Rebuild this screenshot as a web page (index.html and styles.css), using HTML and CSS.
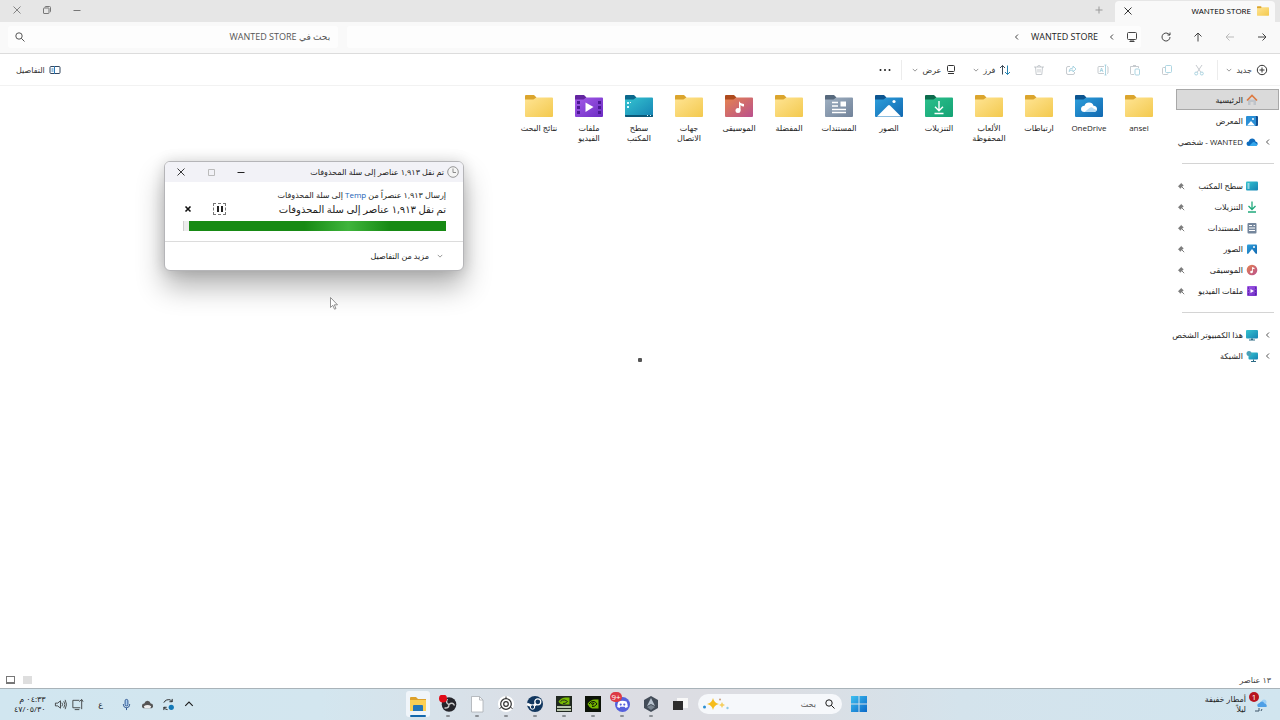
FILE: index.html
```html
<!DOCTYPE html>
<html lang="ar" dir="rtl">
<head>
    <meta charset="UTF-8">
    <meta name="viewport" content="width=device-width, initial-scale=1.0">
    <title>WANTED STORE</title>
    <link rel="stylesheet" href="styles.css">
</head>
<body>

    <!-- Icon sprite -->
    <svg class="sprite" aria-hidden="true">
        <defs>
            <linearGradient id="gYellow" x1="0" y1="0" x2="1" y2="1"><stop offset="0" stop-color="#ffe493"/><stop offset="1" stop-color="#f3c94e"/></linearGradient>
            <linearGradient id="gPurple" x1="0" y1="0" x2="1" y2="1"><stop offset="0" stop-color="#a45be8"/><stop offset="1" stop-color="#6c2cc4"/></linearGradient>
            <linearGradient id="gTeal" x1="0" y1="0" x2="1" y2="1"><stop offset="0" stop-color="#35c4d0"/><stop offset="1" stop-color="#1583b4"/></linearGradient>
            <linearGradient id="gMusic" x1="0" y1="0" x2="1" y2="1"><stop offset="0" stop-color="#e5834f"/><stop offset="1" stop-color="#b9508e"/></linearGradient>
            <linearGradient id="gGrey" x1="0" y1="0" x2="1" y2="1"><stop offset="0" stop-color="#9fb0c2"/><stop offset="1" stop-color="#718299"/></linearGradient>
            <linearGradient id="gBlue" x1="0" y1="0" x2="1" y2="1"><stop offset="0" stop-color="#2d9fdc"/><stop offset="1" stop-color="#1168b0"/></linearGradient>
            <linearGradient id="gGreen" x1="0" y1="0" x2="1" y2="1"><stop offset="0" stop-color="#2cc08c"/><stop offset="1" stop-color="#14a274"/></linearGradient>
            <linearGradient id="gWin" x1="0" y1="0" x2="1" y2="1"><stop offset="0" stop-color="#3fc0f0"/><stop offset="1" stop-color="#0a68c8"/></linearGradient>
        </defs>
        <symbol id="close" viewBox="0 0 10 10"><path d="M1.5 1.5l7 7M8.500 1.500l-7 7" fill="none" stroke="currentColor" stroke-width=".9"/></symbol>
        <symbol id="restore" viewBox="0 0 10 10"><path d="M3 2.500V2q0-.5.5-.5h4q1 0 1 1v4q0 .5-.5.500M1.500 3.500q0-.5.5-.5h4.500q.5 0 .5.5v4.500q0 .5-.5.500H2q-.5 0-.5-.5z" fill="none" stroke="currentColor"/></symbol>
        <symbol id="square" viewBox="0 0 10 10"><path d="M2.500 2.500h6v6h-6z" fill="none" stroke="currentColor"/></symbol>
        <symbol id="minus" viewBox="0 0 10 10"><path d="M1.500 5.500h7" stroke="currentColor"/></symbol>
        <symbol id="plus" viewBox="0 0 10 10"><path d="M5 1.500v7M1.500 5h7" stroke="currentColor"/></symbol>
        <symbol id="right" viewBox="0 0 12 12"><path d="M2 6h8M6.500 2.500L10 6l-3.500 3.500" fill="none" stroke="currentColor"/></symbol>
        <symbol id="left" viewBox="0 0 12 12"><path d="M10 6H2M5.500 2.500L2 6l3.500 3.500" fill="none" stroke="currentColor"/></symbol>
        <symbol id="up" viewBox="0 0 12 12"><path d="M6 10.500V2M2.500 5.500L6 2l3.500 3.500" fill="none" stroke="currentColor"/></symbol>
        <symbol id="refresh" viewBox="0 0 12 12"><path d="M10 6A4 4 0 1 1 8.500 2.900L10 4M10 1.500V4H7.500" fill="none" stroke="currentColor"/></symbol>
        <symbol id="monitor" viewBox="0 0 12 12"><rect x="1.500" y="1.500" width="9" height="7" rx="1" fill="none" stroke="currentColor"/><path d="M3.500 10.500h5M5 9v1M7 9v1" stroke="currentColor"/></symbol>
        <symbol id="chevLeft" viewBox="0 0 8 8"><path d="M5 1.500L2.500 4 5 6.500" fill="none" stroke="currentColor"/></symbol>
        <symbol id="chevDown" viewBox="0 0 8 8"><path d="M1 2.500l3 3 3-3" fill="none" stroke="currentColor"/></symbol>
        <symbol id="chevUp" viewBox="0 0 8 8"><path d="M1 5.500l3-3 3 3" fill="none" stroke="currentColor" stroke-width=".9"/></symbol>
        <symbol id="search" viewBox="0 0 12 12"><circle cx="5" cy="5" r="3.200" fill="none" stroke="currentColor"/><path d="M7.300 7.300L10.500 10.500" stroke="currentColor"/></symbol>
        <symbol id="add" viewBox="0 0 12 12"><circle cx="6" cy="6" r="4.700" fill="none" stroke="currentColor"/><path d="M6 3.500v5M3.500 6h5" stroke="currentColor"/></symbol>
        <symbol id="cut" viewBox="0 0 12 12"><path d="M3 1l5 7.500M9 1L4 8.500" fill="none" stroke="#8a939c" stroke-width=".8"/><circle cx="3.200" cy="9.500" r="1.500" fill="none" stroke="#57a9c4" stroke-width=".8"/><circle cx="8.800" cy="9.500" r="1.500" fill="none" stroke="#57a9c4" stroke-width=".8"/></symbol>
        <symbol id="copy" viewBox="0 0 12 12"><rect x="4.500" y="1.500" width="6" height="7" rx="1" fill="none" stroke="#57a9c4" stroke-width=".8"/><path d="M4 3.500H2.500q-1 0-1 1v5q0 1 1 1H6q1 0 1-1" fill="none" stroke="#8a939c" stroke-width=".8"/></symbol>
        <symbol id="paste" viewBox="0 0 12 12"><path d="M5 10.500H2.500q-1 0-1-1V2.500h8V4M4 1.500h3" fill="none" stroke="#8a939c" stroke-width=".8"/><rect x="6" y="5" width="4.500" height="6" rx="1" fill="none" stroke="#57a9c4" stroke-width=".8"/></symbol>
        <symbol id="rename" viewBox="0 0 12 12"><path d="M7 2.500H2q-1 0-1 1v5q0 1 1 1h5M10 2.500q1 0 1 1v5q0 1-1 1" fill="none" stroke="#8a939c" stroke-width=".8"/><path d="M8.500 1v10M7.500 1h2M7.500 11h2M3 8l1.500-4L6 8M3.500 6.500h2" fill="none" stroke="#57a9c4" stroke-width=".8"/></symbol>
        <symbol id="share" viewBox="0 0 12 12"><path d="M5 2.500H3q-1.500 0-1.500 1.500v5q0 1.500 1.500 1.500h5q1.500 0 1.500-1.500V8" fill="none" stroke="#8a939c" stroke-width=".8"/><path d="M4 7.500q0-3.500 4-3.500V2l3 3-3 3V6Q5.500 6 4 7.500z" fill="none" stroke="#57a9c4" stroke-width=".8"/></symbol>
        <symbol id="trash" viewBox="0 0 12 12"><path d="M1 3h10M4.500 3q0-1.500 1.500-1.500T7.500 3M2.500 3l.7 7.500h5.600L9.500 3M5 5v3.500M7 5v3.500" fill="none" stroke="#8a939c" stroke-width=".8"/></symbol>
        <symbol id="sort" viewBox="0 0 12 12"><path d="M3.500 10.500v-9M1 4l2.500-2.500L6 4" fill="none" stroke="#3e4c59"/><path d="M8.500 1.500v9M6 8l2.500 2.500L11 8" fill="none" stroke="#2583b0"/></symbol>
        <symbol id="view" viewBox="0 0 12 12"><rect x="2.500" y="1.500" width="7" height="6" rx="1" fill="none" stroke="currentColor"/><path d="M3 9.500h6" stroke="currentColor"/></symbol>
        <symbol id="dots" viewBox="0 0 12 12"><g fill="currentColor"><circle cx="1.500" cy="6" r="1"/><circle cx="6" cy="6" r="1"/><circle cx="10.500" cy="6" r="1"/></g></symbol>
        <symbol id="pane" viewBox="0 0 12 12"><rect x="1" y="2.500" width="10" height="7" rx="1" fill="none" stroke="#33475f"/><path d="M5.500 2v8M2.500 5h2M2.500 7h2" stroke="#2a7ab8"/></symbol>

        <symbol id="folder" viewBox="0 0 28 24"><path d="M0 2q0-1 1-1h8l2.500 2.500L9 7H0z" fill="#dba52d"/><path d="M0 5.500h8.500l3-2H27q1 0 1 1V22q0 1-1 1H1q-1 0-1-1z" fill="url(#gYellow)"/></symbol>
        <symbol id="fVideo" viewBox="0 0 28 24"><path d="M0 2q0-1 1-1h8l2.500 2.500L9 7H0z" fill="#6325a0"/><path d="M0 5.500h8.500l3-2H27q1 0 1 1V22q0 1-1 1H1q-1 0-1-1z" fill="url(#gPurple)"/><g fill="#4b1894"><path d="M2 7h3v3H2zM2 12h3v3H2zM2 17h3v3H2zM23 7h3v3h-3zM23 12h3v3h-3zM23 17h3v3h-3z"/></g><path d="M10.500 8.500l8 4.500-8 5z" fill="#fff"/></symbol>
        <symbol id="fDesktop" viewBox="0 0 28 24"><path d="M0 2q0-1 1-1h8l2.500 2.500L9 7H0z" fill="#0b688c"/><path d="M0 5.500h8.500l3-2H27q1 0 1 1V22q0 1-1 1H1q-1 0-1-1z" fill="url(#gTeal)"/><path d="M0 21h28v1q0 1-1 1H1q-1 0-1-1z" fill="#0b5878"/><path d="M2 8h2v2H2zM2 12h2v2H2zM5 8h1v1H5zM22 21h1v1h-1zM25 21h1v1h-1z" fill="#d8fbff"/></symbol>
        <symbol id="fMusic" viewBox="0 0 28 24"><path d="M0 2q0-1 1-1h8l2.500 2.500L9 7H0z" fill="#ae4a1d"/><path d="M0 5.500h8.500l3-2H27q1 0 1 1V22q0 1-1 1H1q-1 0-1-1z" fill="url(#gMusic)"/><path d="M14 6.500q0 2.500 5 3.500v2.500q-2 0-3.500-1.500v5.500H14z" fill="#fff"/><circle cx="13" cy="16.500" r="2.500" fill="#fff"/></symbol>
        <symbol id="fDocs" viewBox="0 0 28 24"><path d="M0 2q0-1 1-1h8l2.500 2.500L9 7H0z" fill="#57697d"/><path d="M0 5.500h8.500l3-2H27q1 0 1 1V22q0 1-1 1H1q-1 0-1-1z" fill="url(#gGrey)"/><path d="M7 8.500h6M7 12h6M7 15.500h14M7 18.500h14" stroke="#fff" stroke-width="1.600"/><path d="M15.500 7.500h5.500v5h-5.500z" fill="#fff"/></symbol>
        <symbol id="fPics" viewBox="0 0 28 24"><path d="M0 2q0-1 1-1h8l2.500 2.500L9 7H0z" fill="#0c5590"/><path d="M0 5.500h8.500l3-2H27q1 0 1 1V22q0 1-1 1H1q-1 0-1-1z" fill="url(#gBlue)"/><path d="M2 22.500L13 11.500q1-1 2 0l11 11z" fill="#fff"/><circle cx="19" cy="7.500" r="1.600" fill="#fff"/></symbol>
        <symbol id="fDown" viewBox="0 0 28 24"><path d="M0 2q0-1 1-1h8l2.500 2.500L9 7H0z" fill="#0d6b4d"/><path d="M0 5.500h8.500l3-2H27q1 0 1 1V22q0 1-1 1H1q-1 0-1-1z" fill="url(#gGreen)"/><path d="M14 7v9.500M10 12.800l4 4 4-4M9.500 19.500h9" fill="none" stroke="#fff" stroke-width="1.400"/></symbol>
        <symbol id="fCloud" viewBox="0 0 28 24"><path d="M0 2q0-1 1-1h8l2.500 2.500L9 7H0z" fill="#0c5590"/><path d="M0 5.500h8.500l3-2H27q1 0 1 1V22q0 1-1 1H1q-1 0-1-1z" fill="url(#gBlue)"/><path d="M9.500 18q-3.500 0-3.500-3t3.500-3.200Q10.500 8.500 14 8.500t4.500 3.300Q22 12 22 15t-3.500 3z" fill="#fff"/><path d="M9.500 18l5-4q2-1.500 4 .5l3 1.500q-.8 2-3 2z" fill="#b6dcf5"/></symbol>

        <symbol id="home" viewBox="0 0 12 12"><path d="M2 5.500h8V11H7.500V8h-3v3H2z" fill="#bfc4ca"/><path d="M1 6.500l5-5 5 5" fill="none" stroke="#dd7a40" stroke-width="1.700"/></symbol>
        <symbol id="gallery" viewBox="0 0 12 12"><rect x="3" y="1" width="9" height="10" rx="1" fill="#124f91"/><rect x="0" y="1" width="10" height="10" rx="1" fill="#2a8fd6"/><path d="M1 10.500l4-4.500 4 4.500z" fill="#fff"/><circle cx="7" cy="4" r="1" fill="#fff"/></symbol>
        <symbol id="cloud" viewBox="0 0 12 12"><path d="M3 10Q.5 10 .5 7.800T2.700 5.500Q3.500 2.500 6.200 2.500T9.500 5.500q2.200.3 2.200 2.300T9.500 10z" fill="#0f6cbd"/><path d="M3 10l3.500-3.500Q8 5.500 9.500 7l2 1.500Q11 10 9.500 10z" fill="#35a7ec"/></symbol>
        <symbol id="desk" viewBox="0 0 12 12"><rect x="0" y="1.500" width="12" height="9" rx="1" fill="url(#gTeal)"/><path d="M1.500 3.500h2v1h-2zM1.500 5.500h2v1h-2zM1.500 7.500h2v1h-2z" fill="#fff"/></symbol>
        <symbol id="down" viewBox="0 0 12 12"><path d="M6 .5V8M2.500 5L6 8.500 9.500 5M2 11h8" fill="none" stroke="#20a97c" stroke-width="1.300"/></symbol>
        <symbol id="doc" viewBox="0 0 12 12"><rect x="1.500" y="1" width="9" height="10.500" rx="1" fill="#74869c"/><path d="M3 3.500h3M3 6h6M3 8.500h6M7.500 3.500H9" stroke="#fff"/></symbol>
        <symbol id="pic" viewBox="0 0 12 12"><rect x="1" y="1.500" width="10" height="9.500" rx="1" fill="url(#gBlue)"/><path d="M2 11l4-5 4 5z" fill="#fff"/><circle cx="8" cy="4" r="1" fill="#fff"/></symbol>
        <symbol id="music" viewBox="0 0 12 12"><circle cx="6" cy="6" r="5.300" fill="url(#gMusic)"/><path d="M6 3l2.500 1v1.200L6.800 4.800V8H6z" fill="#fff"/><circle cx="5.500" cy="8" r="1.300" fill="#fff"/></symbol>
        <symbol id="video" viewBox="0 0 12 12"><rect x="1" y="1" width="10" height="10" rx="1" fill="url(#gPurple)"/><path d="M2 3h1M2 6h1M2 9h1M9 3h1M9 6h1M9 9h1" stroke="#3c1283"/><path d="M4.500 4l3.500 2-3.500 2z" fill="#fff"/></symbol>
        <symbol id="pc" viewBox="0 0 12 12"><rect x="0" y="1" width="12" height="8.500" rx="1" fill="url(#gTeal)"/><path d="M3 11h6" stroke="#2c6a84"/><path d="M5 9.500h2V11H5z" fill="#2c6a84"/></symbol>
        <symbol id="net" viewBox="0 0 12 12"><rect x="2.500" y="2.500" width="9.500" height="7" rx="1" fill="url(#gTeal)"/><circle cx="3" cy="3.500" r="2.500" fill="#4aa0b8"/><path d="M5 11.500h5M7.500 9.500v2" stroke="#2c6a84"/></symbol>
        <symbol id="pin" viewBox="0 0 8 8"><path d="M4.500.8L.8 4.500l1 .2 1.400 2L6.700 3.200l-2-1.400z" fill="#7d7d7d"/><path d="M5 5l2.200 2.200" stroke="#7d7d7d"/></symbol>
        <symbol id="clock" viewBox="0 0 12 12"><circle cx="6" cy="6" r="5.300" fill="#f4f4f4" stroke="#8b8b8b" stroke-width=".9"/><path d="M6 2.500V6.500h3" fill="none" stroke="#8b8b8b"/></symbol>
    </svg>

    <!-- Tab bar -->
    <header class="tab-bar">
        <div class="tab">
            <svg class="icon"><use href="#folder"/></svg>
            <span class="tab-title">WANTED STORE</span>
            <button class="tab-close" aria-label="إغلاق علامة التبويب"><svg class="icon-small"><use href="#close"/></svg></button>
        </div>
        <button class="new-tab" aria-label="علامة تبويب جديدة"><svg class="icon-small"><use href="#plus"/></svg></button>
        <div class="window-buttons">
            <button aria-label="تصغير"><svg class="icon-small"><use href="#minus"/></svg></button>
            <button aria-label="استعادة"><svg class="icon-small"><use href="#restore"/></svg></button>
            <button aria-label="إغلاق"><svg class="icon-small"><use href="#close"/></svg></button>
        </div>
    </header>

    <!-- Navigation bar -->
    <nav class="nav-bar">
        <div class="nav-buttons">
            <button aria-label="رجوع"><svg class="icon"><use href="#right"/></svg></button>
            <button aria-label="للأمام" class="dim"><svg class="icon"><use href="#left"/></svg></button>
            <button aria-label="لأعلى"><svg class="icon"><use href="#up"/></svg></button>
            <button aria-label="تحديث"><svg class="icon"><use href="#refresh"/></svg></button>
        </div>
        <div class="address">
            <svg class="icon"><use href="#monitor"/></svg>
            <svg class="chevron"><use href="#chevLeft"/></svg>
            <a href="#">WANTED STORE</a>
            <svg class="chevron"><use href="#chevLeft"/></svg>
        </div>
        <div class="search-box">
            <input type="text" placeholder="بحث في WANTED STORE" aria-label="بحث">
            <svg class="icon"><use href="#search"/></svg>
        </div>
    </nav>

    <!-- Command bar -->
    <div class="command-bar">
        <button class="command"><svg class="icon"><use href="#add"/></svg>جديد<svg class="arrow"><use href="#chevDown"/></svg></button>
        <span class="divider"></span>
        <div class="edit-buttons">
            <button aria-label="قص"><svg class="icon"><use href="#cut"/></svg></button>
            <button aria-label="نسخ"><svg class="icon"><use href="#copy"/></svg></button>
            <button aria-label="لصق"><svg class="icon"><use href="#paste"/></svg></button>
            <button aria-label="إعادة تسمية"><svg class="icon"><use href="#rename"/></svg></button>
            <button aria-label="مشاركة"><svg class="icon"><use href="#share"/></svg></button>
            <button aria-label="حذف"><svg class="icon"><use href="#trash"/></svg></button>
        </div>
        <button class="command"><svg class="icon"><use href="#sort"/></svg>فرز<svg class="arrow"><use href="#chevDown"/></svg></button>
        <button class="command view"><svg class="icon"><use href="#view"/></svg>عرض<svg class="arrow"><use href="#chevDown"/></svg></button>
        <span class="divider"></span>
        <button class="more" aria-label="المزيد"><svg class="icon"><use href="#dots"/></svg></button>
        <button class="command details"><svg class="icon"><use href="#pane"/></svg>التفاصيل</button>
    </div>

    <!-- Explorer -->
    <div class="explorer">
        <aside class="sidebar">
            <ul>
                <li class="selected"><a href="#"><svg class="icon"><use href="#home"/></svg>الرئيسية</a></li>
                <li><a href="#"><svg class="icon"><use href="#gallery"/></svg>المعرض</a></li>
                <li><svg class="chevron"><use href="#chevLeft"/></svg><a href="#"><svg class="icon"><use href="#cloud"/></svg>WANTED - شخصي</a></li>
            </ul>
            <ul>
                <li><a href="#"><svg class="icon"><use href="#desk"/></svg>سطح المكتب</a><svg class="pin"><use href="#pin"/></svg></li>
                <li><a href="#"><svg class="icon"><use href="#down"/></svg>التنزيلات</a><svg class="pin"><use href="#pin"/></svg></li>
                <li><a href="#"><svg class="icon"><use href="#doc"/></svg>المستندات</a><svg class="pin"><use href="#pin"/></svg></li>
                <li><a href="#"><svg class="icon"><use href="#pic"/></svg>الصور</a><svg class="pin"><use href="#pin"/></svg></li>
                <li><a href="#"><svg class="icon"><use href="#music"/></svg>الموسيقى</a><svg class="pin"><use href="#pin"/></svg></li>
                <li><a href="#"><svg class="icon"><use href="#video"/></svg>ملفات الفيديو</a><svg class="pin"><use href="#pin"/></svg></li>
            </ul>
            <ul>
                <li><svg class="chevron"><use href="#chevLeft"/></svg><a href="#"><svg class="icon"><use href="#pc"/></svg>هذا الكمبيوتر الشخص</a></li>
                <li><svg class="chevron"><use href="#chevLeft"/></svg><a href="#"><svg class="icon"><use href="#net"/></svg>الشبكة</a></li>
            </ul>
        </aside>

        <main class="files">
            <a href="#" class="file"><svg><use href="#folder"/></svg><span>ansel</span></a>
            <a href="#" class="file"><svg><use href="#fCloud"/></svg><span>OneDrive</span></a>
            <a href="#" class="file"><svg><use href="#folder"/></svg><span>ارتباطات</span></a>
            <a href="#" class="file"><svg><use href="#folder"/></svg><span>الألعاب المحفوظة</span></a>
            <a href="#" class="file"><svg><use href="#fDown"/></svg><span>التنزيلات</span></a>
            <a href="#" class="file"><svg><use href="#fPics"/></svg><span>الصور</span></a>
            <a href="#" class="file"><svg><use href="#fDocs"/></svg><span>المستندات</span></a>
            <a href="#" class="file"><svg><use href="#folder"/></svg><span>المفضلة</span></a>
            <a href="#" class="file"><svg><use href="#fMusic"/></svg><span>الموسيقى</span></a>
            <a href="#" class="file"><svg><use href="#folder"/></svg><span>جهات الاتصال</span></a>
            <a href="#" class="file"><svg><use href="#fDesktop"/></svg><span>سطح المكتب</span></a>
            <a href="#" class="file"><svg><use href="#fVideo"/></svg><span>ملفات الفيديو</span></a>
            <a href="#" class="file"><svg><use href="#folder"/></svg><span>نتائج البحث</span></a>
        </main>
    </div>

    <!-- Status bar -->
    <footer class="status-bar">
        <span>١٣ عناصر</span>
        <div class="layout-buttons">
            <button class="list-view" aria-label="تفاصيل"></button>
            <button class="icon-view" aria-label="رموز كبيرة"></button>
        </div>
    </footer>

    <!-- Taskbar -->
    <div class="taskbar">
        <button class="weather">
            <span class="weather-icon">
                <svg viewBox="0 0 16 18"><circle cx="12" cy="7" r="2.500" fill="#9fd0f5"/><path d="M6 12q-2-3 1.500-4 3-3 5 .5 3 .5 2 3.500z" fill="#4e9fe6"/><path d="M7 13v3H3M10 14l-1 2" fill="none" stroke="#3d5468"/></svg>
                <span class="badge">1</span>
            </span>
            <span>أمطار خفيفة<br>ليلاً</span>
        </button>

        <div class="apps">
            <button aria-label="ابدأ"><svg viewBox="0 0 18 18"><path d="M1 1h7.500v7.500H1zM9.500 1H17v7.500H9.500zM1 9.500h7.500V17H1zM9.500 9.500H17V17H9.500z" fill="url(#gWin)"/></svg></button>
            <div class="task-search">
                <svg class="icon"><use href="#search"/></svg>
                <input type="text" placeholder="بحث" aria-label="بحث في شريط المهام">
                <svg class="sparkle" viewBox="0 0 28 14"><path d="M11 1q1 5 6 6-5 1-6 6-1-5-6-6 5-1 6-6z" fill="#f6bc1c"/><path d="M20 5q.5 2.500 3 3-2.500.5-3 3-.5-2.500-3-3 2.500-.5 3-3z" fill="#f4cf62"/><circle cx="2.500" cy="10" r="1.500" fill="#2b8fd0"/><circle cx="18" cy="2.500" r="1" fill="#c79b7a"/><circle cx="25.500" cy="11" r="1.200" fill="#8ecae6"/></svg>
            </div>
            <button aria-label="عرض المهام"><svg viewBox="0 0 18 18"><path d="M6 3h11v10H6z" fill="#f8f8f8"/><path d="M2 6h10v9H2z" fill="#2d2d2d"/></svg></button>
            <button class="running" aria-label="NVIDIA Frame"><svg viewBox="0 0 18 18"><path d="M9 1l7 4v8l-7 4-7-4V5z" fill="#434c58"/><path d="M9 3l4 8-4-2-4 2z" fill="#b9c3cf"/><path d="M5 12l4-2 4 2-4 3z" fill="#78838f"/></svg></button>
            <button class="running" aria-label="Discord"><svg viewBox="0 0 18 18"><circle cx="9.500" cy="9.500" r="7.500" fill="#5560dc"/><path d="M5.500 6.500q4-1.500 8 0 1.500 3 1.300 5.500l-2.300 1-.8-1.200H7.300L6.500 13l-2.300-1Q4 9.500 5.500 6.500z" fill="#fff"/><circle cx="7.700" cy="9.600" r="1.100" fill="#5560dc"/><circle cx="11.300" cy="9.600" r="1.100" fill="#5560dc"/></svg><span class="badge count" dir="ltr">9+</span></button>
            <button class="running" aria-label="NVIDIA"><svg viewBox="0 0 18 18"><path d="M1 1h16v16H1z" fill="#0c1208"/><path d="M3.500 9q3-4.500 7-4.500h4v9H8Q5 12.500 3.500 9z" fill="#76b900"/><path d="M5 9q2-3 5-2.500 2 .5 3 2.500-2.500 3-5 2.500M7 9q1.500-1.500 3-.5-1 1.500-2 1.500" fill="none" stroke="#0c1208"/></svg></button>
            <button class="running" aria-label="NVIDIA Inspector"><svg viewBox="0 0 18 18"><path d="M1 1h16v16H1z" fill="#202820"/><path d="M3.500 6.500q3-4 7-4h4v7H8Q5 9.500 3.500 6.500z" fill="#76b900"/><path d="M5.500 6.500q2-2 4-1.500t3 1.500Q10 9 8 8.500" fill="none" stroke="#202820"/><path d="M2 11h14v2H2zM2 14h14v2H2z" fill="#b8c4ac"/></svg></button>
            <button class="running" aria-label="Steam"><svg viewBox="0 0 18 18"><circle cx="9" cy="9" r="8" fill="#12375f"/><path d="M1 9l6 2.500L11 8" fill="none" stroke="#fff" stroke-width="2.500"/><circle cx="11.800" cy="6.800" r="3" fill="#12375f" stroke="#fff" stroke-width="1.300"/><circle cx="6.500" cy="12" r="2.200" fill="#12375f" stroke="#fff"/></svg></button>
            <button class="running" aria-label="الإعدادات"><svg viewBox="0 0 18 18"><circle cx="9" cy="9" r="6.800" fill="none" stroke="#fff" stroke-width="2.500"/><circle cx="9" cy="9" r="5.300" fill="#fff" stroke="#333" stroke-width="1.200"/><circle cx="9" cy="9" r="2.300" fill="none" stroke="#333" stroke-width="1.200"/><path d="M9 1.500v2.500M2.500 13.500l2-1.200M15.500 13.500l-2-1.200" stroke="#333"/></svg></button>
            <button class="running" aria-label="المفكرة"><svg viewBox="0 0 18 18"><path d="M3.500 1.500h8l3.500 3.500v12H3.500z" fill="#fff" stroke="#a9adb2" stroke-width=".8"/><path d="M11.500 1.500V5H15" fill="none" stroke="#a9adb2" stroke-width=".8"/></svg></button>
            <button class="running" aria-label="OBS Studio"><svg viewBox="0 0 18 18"><circle cx="10" cy="9.500" r="7.300" fill="#25252b"/><path d="M10 9.500Q6 8 8.500 4M10 9.500q3.500-3 5.500 1M10 9.500q0 4-4.500 3.500" fill="none" stroke="#ccc" stroke-width="1.400"/><circle cx="4" cy="3.500" r="4" fill="#e00a17"/></svg></button>
            <button class="running active" aria-label="مستكشف الملفات"><svg viewBox="0 0 18 18"><path d="M1 3q0-1 1-1h5l2 2h8v5H1z" fill="#dda12c"/><path d="M1 5h16v11H1z" fill="#fbcf54"/><path d="M4 11q0-1 1-1h8q1 0 1 1v5H4z" fill="#2576b8"/></svg></button>
        </div>

        <div class="tray">
            <button aria-label="إظهار الرموز المخفية"><svg class="icon-small"><use href="#chevUp"/></svg></button>
            <button aria-label="تحديث النظام"><svg viewBox="0 0 14 14"><path d="M2 5q2-4 7-3l2 2M11 1v3H8M2 13v-3h3M2 10q1 2.500 4 2.500" fill="none" stroke="#222"/><circle cx="10" cy="10" r="2.800" fill="#147ab8"/></svg></button>
            <button aria-label="OneDrive"><svg viewBox="0 0 14 14"><path d="M4 11Q1 11 1 8.500T3.500 6Q4.500 3 7 3t3.500 3Q13 6 13 8.500T10 11z" fill="#555"/><path d="M3 9q4-3 8 0l-1 2H4z" fill="#eee"/></svg></button>
            <button aria-label="الميكروفون"><svg viewBox="0 0 14 14"><rect x="5.500" y="1.500" width="3" height="7" rx="1.500" fill="#a9cdf2" stroke="#27508c"/><path d="M3.500 6.500q0 4 3.500 4t3.500-4M7 10.500V13" fill="none" stroke="#27508c"/></svg></button>
            <button class="language">ع</button>
            <button class="network" aria-label="الشبكة والصوت">
                <svg viewBox="0 0 14 14"><path d="M9 2.500H2v8h8M4 12.500h5M9 4l2.500-2.500L13 4M11.500 2v10" fill="none" stroke="#333" stroke-width=".9"/></svg>
                <svg viewBox="0 0 14 14"><path d="M1.500 5.500H4L7 3v8L4 8.500H1.500zM8.500 5q1.500 2 0 4M10.500 3.500q2.500 3.500 0 7M12 2q3 5 0 10" fill="none" stroke="#333" stroke-width=".9"/></svg>
            </button>
            <button class="time">٠٤:٣٣ م<br>٤٧/٠٥/٣٠</button>
        </div>
    </div>

    <!-- Delete progress window -->
    <section class="dialog" role="dialog" aria-labelledby="dialogTitle">
        <div class="dialog-title">
            <svg class="icon"><use href="#clock"/></svg>
            <span id="dialogTitle">تم نقل ١,٩١٣ عناصر إلى سلة المحذوفات</span>
            <div class="window-buttons">
                <button aria-label="تصغير"><svg class="icon-small"><use href="#minus"/></svg></button>
                <button aria-label="تكبير" class="dim"><svg class="icon-small"><use href="#square"/></svg></button>
                <button aria-label="إغلاق"><svg class="icon-small"><use href="#close"/></svg></button>
            </div>
        </div>
        <div class="dialog-body">
            <p>إرسال ١,٩١٣ عنصراً من <a href="#">Temp</a> إلى سلة المحذوفات</p>
            <div class="dialog-status">
                <label for="deleteProgress">تم نقل ١,٩١٣ عناصر إلى سلة المحذوفات</label>
                <button class="pause" aria-label="إيقاف مؤقت"></button>
                <button class="cancel" aria-label="إلغاء"><svg viewBox="0 0 8 8"><path d="M1.500 1.500l5 5M6.500 1.500l-5 5" stroke="#111" stroke-width="1.600"/></svg></button>
            </div>
            <progress id="deleteProgress" value="98" max="100"></progress>
        </div>
        <div class="dialog-footer">
            <button><svg class="arrow"><use href="#chevDown"/></svg>مزيد من التفاصيل</button>
        </div>
    </section>

    <span class="busy-dot"></span>
    <svg class="cursor" viewBox="0 0 8 13"><path d="M.5.5v10l2.300-2.200 1.700 3.900 1.500-.7-1.700-3.700h3.200z" fill="#fff" stroke="#777" stroke-width=".8"/></svg>

</body>
</html>
```
FILE: styles.css
```css
* {
    box-sizing: border-box;
}
body {
    display: flex;
    flex-direction: column;
    height: 100vh;
    margin: 0;
    overflow: hidden;
    background-color: #fff;
    color: #1d1d1d;
    font-family: "Open Sans", "DejaVu Sans", sans-serif;
    font-size: 8px;
    line-height: 10px;
}
a {
    color: inherit;
    text-decoration: none;
}
button {
    display: flex;
    align-items: center;
    justify-content: center;
    padding: 0;
    border: 0;
    background: none;
    color: inherit;
    font: inherit;
}
input {
    min-width: 0;
    border: 0;
    outline: 0;
    background: none;
    color: inherit;
    font: inherit;
}
input::placeholder {
    color: #555;
    opacity: 1;
}
ul {
    margin: 0;
    padding: 0;
    list-style: none;
}
svg {
    flex: none;
}
.sprite {
    position: absolute;
    width: 0;
    height: 0;
}
.icon {
    width: 12px;
    height: 12px;
}
.icon-small {
    width: 10px;
    height: 10px;
}
.chevron,
.arrow,
.pin {
    width: 8px;
    height: 8px;
}
.arrow {
    width: 6px;
    color: #777;
}
.dim {
    color: #aaa;
}

/* Tab bar */
.tab-bar {
    display: flex;
    align-items: center;
    height: 22px;
    padding: 0 5px 2px 0;
    background-color: #e6e6e6;
}
.tab {
    display: flex;
    align-items: center;
    gap: 6px;
    width: 160px;
    height: 21px;
    margin: 1px 0 -2px;
    padding: 0 6px 2px;
    border-radius: 4px 4px 0 0;
    background-color: #f9f9f9;
}
.tab-title {
    color: #000;
}
.tab-close {
    margin-right: auto;
    width: 14px;
}
.new-tab {
    width: 32px;
    color: #999;
}
.window-buttons {
    display: flex;
    margin-right: auto;
    padding-left: 2px;
    color: #777;
}
.window-buttons button {
    width: 30px;
    height: 20px;
}

/* Navigation bar */
.nav-bar {
    display: flex;
    align-items: center;
    gap: 9px;
    height: 32px;
    padding: 0 2px 1px 8px;
    border-bottom: 1px solid #dcdcdc;
    background-color: #f9f9f9;
}
.nav-buttons {
    display: flex;
    color: #444;
}
.nav-buttons button {
    width: 32px;
    height: 22px;
}
.nav-buttons .dim {
    color: #bbb;
}
.address,
.search-box {
    display: flex;
    align-items: center;
    height: 22px;
    border-radius: 3px;
    background-color: #fdfdfd;
    font-size: 9px;
}
.address {
    flex: 1;
    gap: 10px;
    padding: 0 3px;
}
.address .icon,
.address .chevron {
    color: #444;
}
.search-box {
    width: 26%;
    padding: 0 8px 0 6px;
    color: #555;
}
.search-box input {
    flex: 1;
    padding: 0;
}

/* Command bar */
.command-bar {
    display: flex;
    align-items: center;
    height: 32px;
    padding: 0 12px;
    border-bottom: 1px solid #f2f2f2;
}
.command {
    gap: 4px;
    height: 20px;
    color: #333;
}
.divider {
    width: 1px;
    height: 20px;
    margin: 0 8px 0 12px;
    background-color: #ececec;
}
.command-bar > .divider ~ .divider {
    margin: 0 10px;
}
.edit-buttons {
    display: flex;
    gap: 20px;
    margin-left: 22px;
    opacity: 0.6;
}
.view {
    margin-right: 16px;
}
.details {
    margin: 0 auto 0 4px;
}

/* Explorer */
.explorer {
    display: flex;
    flex: 1;
    min-height: 0;
}
.sidebar {
    width: 106px;
    padding: 3px 1px 0 2px;
}
.sidebar ul + ul {
    margin-top: 11px;
    padding-top: 12px;
    background: linear-gradient(#d4d4d4, #d4d4d4) 50% 0 / 92px 1px no-repeat;
}
.sidebar li {
    display: flex;
    align-items: center;
    height: 21px;
    padding-right: 6px;
    border: 1px solid transparent;
}
.sidebar li > a {
    display: flex;
    flex: 1;
    align-items: center;
    gap: 3px;
    min-width: 0;
    margin-right: 14px;
    white-space: nowrap;
}
.sidebar .chevron + a {
    margin-right: 6px;
}
.sidebar .chevron {
    color: #555;
}
.sidebar .selected {
    border-color: #a8a8a8;
    background-color: #dadada;
}
.files {
    display: flex;
    flex: 1;
    flex-wrap: wrap;
    align-content: flex-start;
    padding: 8px 10px;
}
.file {
    width: 50px;
    text-align: center;
}
.file svg {
    display: block;
    width: 28px;
    height: 24px;
    margin: 0 auto 5px;
}
.file span {
    display: block;
    padding: 0 4px;
}

/* Status bar */
.status-bar {
    display: flex;
    align-items: center;
    justify-content: space-between;
    height: 17px;
    padding: 0 9px 0 6px;
    color: #444;
}
.layout-buttons {
    display: flex;
    gap: 8px;
}
.layout-buttons button {
    width: 9px;
    height: 8px;
}
.list-view {
    background-color: #dedede;
}
.icon-view {
    border: 1px solid #777;
    border-bottom-width: 2px;
}

/* Taskbar */
.taskbar {
    display: grid;
    grid-template-columns: 1fr auto 1fr;
    align-items: center;
    height: 32px;
    padding: 0 12px 1px 14px;
    border-top: 1px solid #a9b3b9;
    background: linear-gradient(90deg, #d1e6f0, #d3e6ef 25%, #dcdde4 45%, #dcdde2 60%, #d4e3ec 75%, #d1e5ef);
}
.weather {
    justify-self: start;
    gap: 6px;
    text-align: right;
}
.weather-icon {
    position: relative;
    width: 16px;
    height: 20px;
}
.weather-icon svg {
    width: 16px;
    height: 20px;
}
.badge {
    position: absolute;
    top: -2px;
    left: -3px;
    width: 10px;
    height: 10px;
    border-radius: 5px;
    background-color: #b8141f;
    color: #fff;
    font-size: 8px;
    text-align: center;
}
.apps {
    display: flex;
    align-items: center;
}
.apps button {
    position: relative;
    width: 29px;
    height: 30px;
}
.apps button:first-child {
    width: 34px;
}
.apps button svg {
    width: 18px;
    height: 18px;
}
.apps .running::after {
    position: absolute;
    bottom: 2px;
    left: 13px;
    width: 4px;
    height: 2px;
    border-radius: 1px;
    background-color: #8b8f95;
    content: "";
}
.apps .active {
    width: 24px;
    height: 26px;
    margin-right: 3px;
    border-radius: 3px;
    background-color: #f0f5fa;
}
.apps .active::after {
    bottom: 0;
    left: 4px;
    width: 16px;
    background-color: #1468ac;
}
.apps .count {
    top: 3px;
    left: 3px;
    width: 12px;
    background-color: #dd3a45;
}
.task-search {
    display: flex;
    align-items: center;
    gap: 6px;
    width: 144px;
    height: 20px;
    margin-left: 4px;
    padding: 0 6px 0 4px;
    border-radius: 10px;
    background-color: #f6f8fb;
}
.task-search input {
    flex: 1;
}
.sparkle {
    width: 28px;
    height: 14px;
}
.tray {
    display: flex;
    justify-content: flex-end;
    align-items: center;
}
.tray button {
    width: 21px;
    height: 24px;
}
.tray button svg:not(.icon-small) {
    width: 13px;
    height: 13px;
}
.tray .language {
    width: 30px;
}
.tray .network {
    gap: 4px;
    width: 34px;
}
.tray .time {
    width: auto;
    margin-right: 6px;
    text-align: right;
}

/* Delete progress window */
.dialog {
    position: absolute;
    top: 161px;
    left: 164px;
    width: 300px;
    border: 1px solid #b5b5b8;
    border-radius: 6px;
    background-color: #fff;
    box-shadow: 0 16px 28px rgba(0, 0, 0, 0.3), 0 0 14px rgba(0, 0, 0, 0.14);
}
.dialog-title {
    display: flex;
    align-items: center;
    gap: 3px;
    height: 20px;
    padding-right: 4px;
    border-radius: 5px 5px 0 0;
    background-color: #f2f2f7;
}
.dialog-title .window-buttons {
    padding-left: 1px;
    color: #222;
}
.dialog-title .window-buttons .dim {
    color: #bbb;
}
.dialog-body {
    padding: 8px 17px 10px 18px;
}
.dialog-body p {
    margin: 0;
}
.dialog-body a {
    color: #1c62b5;
}
.dialog-status {
    display: flex;
    align-items: center;
    height: 18px;
    margin-bottom: 3px;
    font-size: 10px;
}
.pause {
    width: 13px;
    height: 12px;
    margin: 0 auto 0 20px;
    border: 1px dashed #777;
    background: linear-gradient(90deg, #222 2px, transparent 2px 4px, #222 4px) center / 6px 6px no-repeat;
}
.cancel svg {
    width: 10px;
    height: 8px;
}
progress {
    display: block;
    width: 100%;
    height: 10px;
    border: 1px solid #cfcfcf;
    border-width: 0 0 0 1px;
    -webkit-appearance: none;
    appearance: none;
}
progress::-webkit-progress-bar {
    background-color: #ececec;
}
progress::-webkit-progress-value {
    background: linear-gradient(90deg, #178a14 45%, #3fb53c 62%, #178a14 78%);
}
.dialog-footer {
    display: flex;
    align-items: center;
    height: 29px;
    padding-right: 20px;
    border-top: 1px solid #dcdcdc;
}
.dialog-footer button {
    gap: 8px;
}

/* Pointer and busy dot */
.busy-dot {
    position: absolute;
    top: 358px;
    left: 638px;
    width: 4px;
    height: 4px;
    border-radius: 1px;
    background-color: #555;
}
.cursor {
    position: absolute;
    top: 297px;
    left: 330px;
    width: 8px;
    height: 13px;
}
```
